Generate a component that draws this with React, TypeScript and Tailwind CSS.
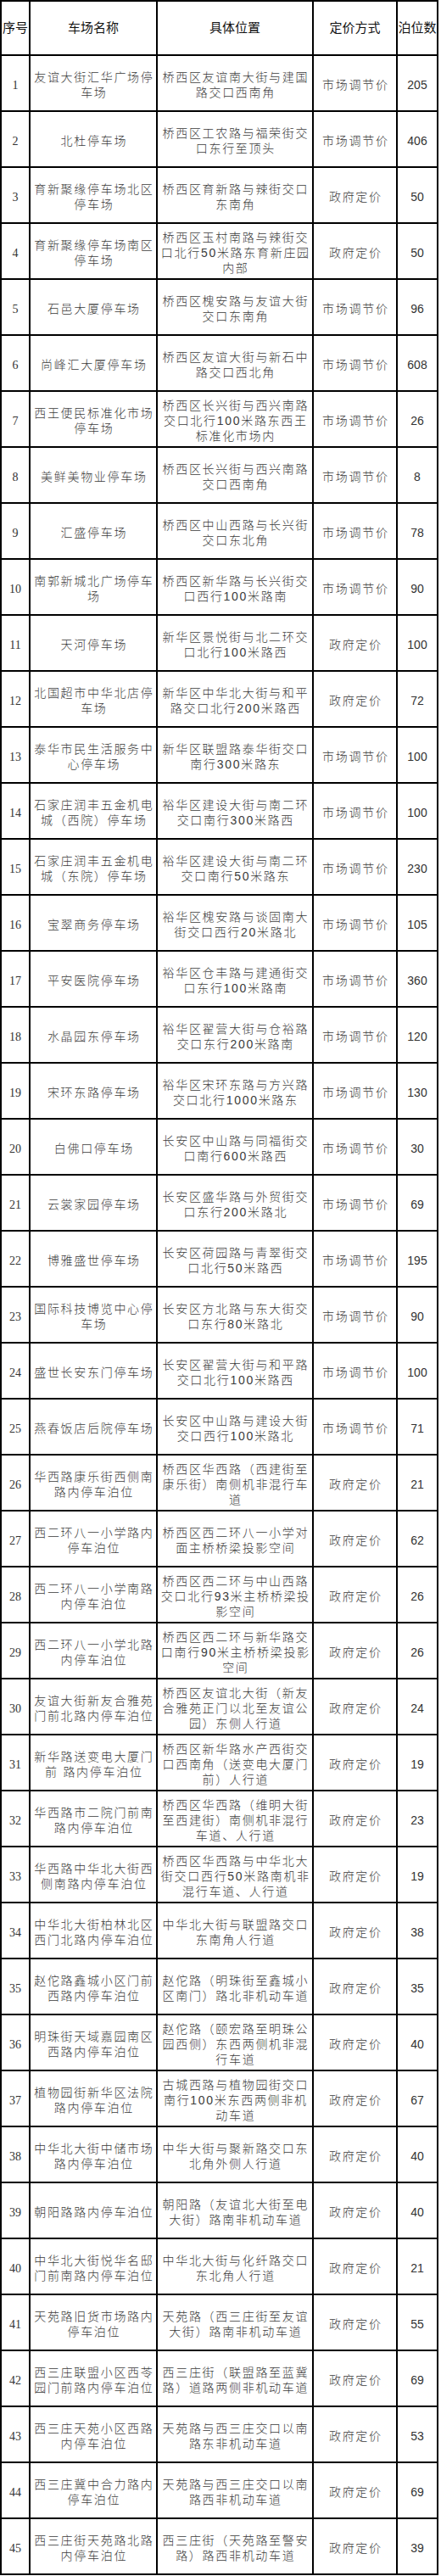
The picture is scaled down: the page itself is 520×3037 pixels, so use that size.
const rows: [string, string, string, string][] = [
  ['友谊大街汇华广场停|车场', '桥西区友谊南大街与建国|路交口西南角', '市场调节价', '205'],
  ['北杜停车场', '桥西区工农路与福荣街交|口东行至顶头', '市场调节价', '406'],
  ['育新聚缘停车场北区|停车场', '桥西区育新路与辣街交口|东南角', '政府定价', '50'],
  ['育新聚缘停车场南区|停车场', '桥西区玉村南路与辣街交|口北行50米路东育新庄园|内部', '政府定价', '50'],
  ['石邑大厦停车场', '桥西区槐安路与友谊大街|交口东南角', '市场调节价', '96'],
  ['尚峰汇大厦停车场', '桥西区友谊大街与新石中|路交口西北角', '市场调节价', '608'],
  ['西王便民标准化市场|停车场', '桥西区长兴街与西兴南路|交口北行100米路东西王|标准化市场内', '市场调节价', '26'],
  ['美鲜美物业停车场', '桥西区长兴街与西兴南路|交口西南角', '市场调节价', '8'],
  ['汇盛停车场', '桥西区中山西路与长兴街|交口东北角', '市场调节价', '78'],
  ['南郭新城北广场停车|场', '桥西区新华路与长兴街交|口西行100米路南', '市场调节价', '90'],
  ['天河停车场', '新华区景悦街与北二环交|口北行100米路西', '政府定价', '100'],
  ['北国超市中华北店停|车场', '新华区中华北大街与和平|路交口北行200米路西', '政府定价', '72'],
  ['泰华市民生活服务中|心停车场', '新华区联盟路泰华街交口|南行300米路东', '市场调节价', '100'],
  ['石家庄润丰五金机电|城（西院）停车场', '裕华区建设大街与南二环|交口南行300米路西', '市场调节价', '100'],
  ['石家庄润丰五金机电|城（东院）停车场', '裕华区建设大街与南二环|交口南行50米路东', '市场调节价', '230'],
  ['宝翠商务停车场', '裕华区槐安路与谈固南大|街交口西行20米路北', '市场调节价', '105'],
  ['平安医院停车场', '裕华区仓丰路与建通街交|口东行100米路南', '市场调节价', '360'],
  ['水晶园东停车场', '裕华区翟营大街与仓裕路|交口东行200米路南', '市场调节价', '120'],
  ['宋环东路停车场', '裕华区宋环东路与方兴路|交口北行1000米路东', '市场调节价', '130'],
  ['白佛口停车场', '长安区中山路与同福街交|口南行600米路西', '市场调节价', '30'],
  ['云裳家园停车场', '长安区盛华路与外贸街交|口东行200米路北', '市场调节价', '69'],
  ['博雅盛世停车场', '长安区荷园路与青翠街交|口北行50米路西', '市场调节价', '195'],
  ['国际科技博览中心停|车场', '长安区方北路与东大街交|口东行80米路北', '市场调节价', '90'],
  ['盛世长安东门停车场', '长安区翟营大街与和平路|交口北行100米路西', '市场调节价', '100'],
  ['燕春饭店后院停车场', '长安区中山路与建设大街|交口西行100米路北', '市场调节价', '71'],
  ['华西路康乐街西侧南|路内停车泊位', '桥西区华西路（西建街至|康乐街）南侧机非混行车|道', '政府定价', '21'],
  ['西二环八一小学路内|停车泊位', '桥西区西二环八一小学对|面主桥桥梁投影空间', '政府定价', '62'],
  ['西二环八一小学南路|内停车泊位', '桥西区西二环与中山西路|交口北行93米主桥桥梁投|影空间', '政府定价', '26'],
  ['西二环八一小学北路|内停车泊位', '桥西区西二环与新华路交|口南行90米主桥桥梁投影|空间', '政府定价', '26'],
  ['友谊大街新友合雅苑|门前北路内停车泊位', '桥西区友谊北大街（新友|合雅苑正门以北至友谊公|园）东侧人行道', '政府定价', '24'],
  ['新华路送变电大厦门|前 路内停车泊位', '桥西区新华路水产西街交|口西南角（送变电大厦门|前）人行道', '政府定价', '19'],
  ['华西路市二院门前南|路内停车泊位', '桥西区华西路（维明大街|至西建街）南侧机非混行|车道、人行道', '政府定价', '23'],
  ['华西路中华北大街西|侧南路内停车泊位', '桥西区华西路与中华北大|街交口西行50米路南机非|混行车道、人行道', '政府定价', '19'],
  ['中华北大街柏林北区|西门北路内停车泊位', '中华北大街与联盟路交口|东南角人行道', '政府定价', '38'],
  ['赵佗路鑫城小区门前|西路内停车泊位', '赵佗路（明珠街至鑫城小|区南门）路北非机动车道', '政府定价', '35'],
  ['明珠街天域嘉园南区|西路内停车泊位', '赵佗路（颐宏路至明珠公|园西侧）东西两侧机非混|行车道', '政府定价', '40'],
  ['植物园街新华区法院|路内停车泊位', '古城西路与植物园街交口|南行100米东西两侧非机|动车道', '政府定价', '67'],
  ['中华北大街中储市场|路内停车泊位', '中华大街与聚新路交口东|北角外侧人行道', '政府定价', '40'],
  ['朝阳路路内停车泊位', '朝阳路（友谊北大街至电|大街）路南非机动车道', '政府定价', '40'],
  ['中华北大街悦华名邸|门前南路内停车泊位', '中华北大街与化纤路交口|东北角人行道', '政府定价', '21'],
  ['天苑路旧货市场路内|停车泊位', '天苑路（西三庄街至友谊|大街）路南非机动车道', '政府定价', '55'],
  ['西三庄联盟小区西苓|园门前路内停车泊位', '西三庄街（联盟路至蓝冀|路）道路两侧非机动车道', '政府定价', '69'],
  ['西三庄天苑小区西路|内停车泊位', '天苑路与西三庄交口以南|路东非机动车道', '政府定价', '53'],
  ['西三庄冀中合力路内|停车泊位', '天苑路与西三庄交口以南|路西非机动车道', '政府定价', '69'],
  ['西三庄街天苑路北路|内停车泊位', '西三庄街（天苑路至警安|路）路西非机动车道', '政府定价', '39'],
];

const cjk = "font-['Liberation_Sans','Noto_Sans_CJK_SC',sans-serif]";
const cell = 'flex flex-col items-center justify-center border-r-2 border-b-2 border-black';

function Lines({ text }: { text: string }) {
  return (
    <div className={`pt-[4px] text-[14px] font-light leading-[18px] tracking-[1.7px] pl-[1.7px] text-[#3c3c3c] text-center ${cjk}`}>
      {text.split('|').map((line, i) => (
        <div key={i} className="whitespace-pre">
          {line}
        </div>
      ))}
    </div>
  );
}

export default function App() {
  return (
    <div className="w-[520px] bg-white">
      <div className="w-[517px] border-l-2 border-t-2 border-black">
        <div className={`grid grid-cols-[34px_150px_184px_99px_48px] h-[64px] text-[15px] text-[#111] ${cjk}`}>
          <div className={cell}>序号</div>
          <div className={cell}>车场名称</div>
          <div className={cell}>具体位置</div>
          <div className={cell}>定价方式</div>
          <div className={cell}>泊位数</div>
        </div>
        {rows.map(([name, place, pricing, count], i) => (
          <div key={i} className="grid grid-cols-[34px_150px_184px_99px_48px] h-[66px]">
            <div className={`${cell} pt-[4px] text-[14px] text-[#333] font-['Liberation_Serif',serif]`}>{i + 1}</div>
            <div className={cell}>
              <Lines text={name} />
            </div>
            <div className={cell}>
              <Lines text={place} />
            </div>
            <div className={cell}>
              <Lines text={pricing} />
            </div>
            <div className={`${cell} pt-[4px] text-[14px] text-[#333] font-['Liberation_Sans',sans-serif]`}>{count}</div>
          </div>
        ))}
      </div>
    </div>
  );
}
